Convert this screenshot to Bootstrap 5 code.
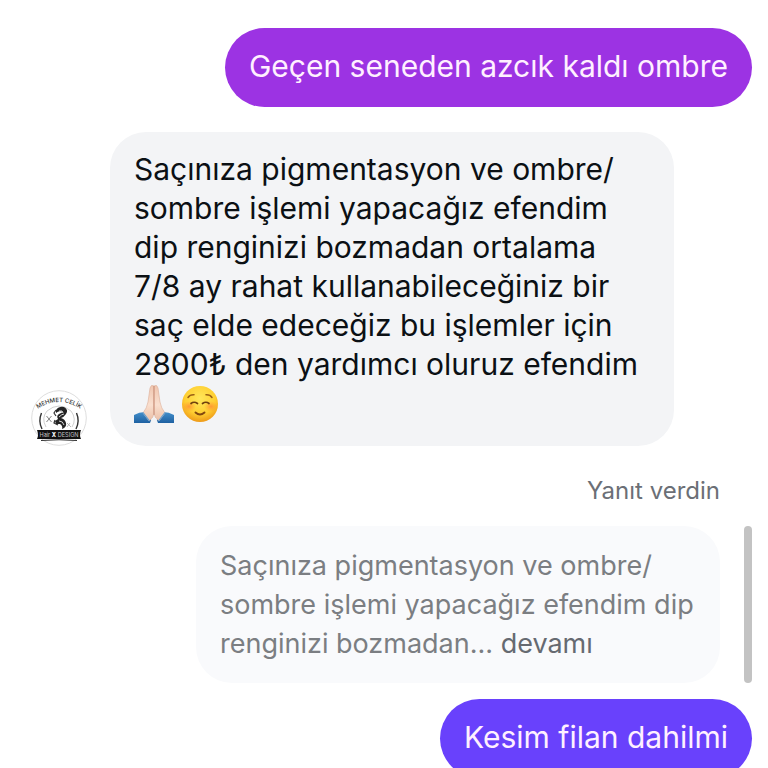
<!DOCTYPE html>
<html lang="tr">
<head>
<meta charset="utf-8">
<meta name="viewport" content="width=device-width, initial-scale=1">
<title>Mesajlar</title>
<link href="https://cdn.jsdelivr.net/npm/bootstrap@5.3.0/dist/css/bootstrap.min.css" rel="stylesheet">
<style>
body{font-family:Inter,"Noto Sans",sans-serif;background:#fff;color:#0b1014}
.chat{padding:28px 16px 0;height:100vh}
.bubble{border-radius:40px;padding:19px 24px 21px;font-size:30px;line-height:39px}
.bubble-in{background:#f3f4f6;border-radius:36px;max-width:564px;padding:18px 24px 22px}
.bubble-sent{background:#9c33e3;color:#fff0ff}
.bubble-last{background:#6941fc;color:#fff0ff}
.incoming{margin-top:25px;padding-left:15px;gap:23px}
.reply-label{margin:30px 32px 0 0;font-size:24px;line-height:30px;color:#6b6f76}
.quote-row{margin-top:20px;gap:24px}
.bubble-quote{background:#f9fafc;color:#7b7e82;font-size:27px;border-radius:36px;max-width:524px;padding:20px 24px}
.bubble-quote a{color:#666a71}
.quote-bar{width:8px;border-radius:4px;background:#c3c3c3}
.last-row{margin-top:16px}
.emoji{width:40px;height:40px;vertical-align:top}
.emoji + .emoji{margin-left:6px}
.avatar{width:56px;height:56px}
</style>
<script src="https://cdn.jsdelivr.net/npm/bootstrap@5.3.0/dist/js/bootstrap.bundle.min.js"></script>
</head>
<body>
<main class="chat d-flex flex-column overflow-hidden">
  <div class="d-flex justify-content-end flex-shrink-0">
    <div class="bubble bubble-sent">Geçen seneden azcık kaldı ombre</div>
  </div>

  <div class="incoming d-flex align-items-end flex-shrink-0">
    <svg class="avatar flex-shrink-0" viewBox="0 0 56 56" role="img" aria-label="Mehmet Çelik Hair Design">
      <defs><path id="arc" d="M5 20Q28 4 51 20"/></defs>
      <circle cx="28" cy="28" r="27.3" fill="#fff" stroke="#dedede" stroke-width="1"/>
      <text font-family="Inter,sans-serif" font-size="6" font-weight="500" fill="#333"><textPath href="#arc" startOffset="50%" text-anchor="middle">MEHMET CELİK</textPath></text>
      <path d="M10.500 23Q7 31 11 39M45.500 23Q49 31 45 39" fill="none" stroke="#333" stroke-width="1.400"/>
      <path d="M15 37Q10 28 16 21Q28 11 40 21Q46 29 41 37" fill="none" stroke="#bbb" stroke-width=".7"/>
      <path d="M15.500 26l5 6M20.500 26l-5 6" stroke="#777" stroke-width=".9"/>
      <path d="M36 33l4 4M39 33l-3 4" stroke="#aaa" stroke-width=".8"/>
      <path d="M25 20Q28 16 33 17Q38 20 35 24Q33 27 30 28Q34 29 35 33Q36 37 31 39Q32 36 29 34L25 34L24 31L27 29Q25 26 28 24L32 22Q28 20 25 23Z" fill="#242424"/>
      <path d="M28 21q4-1 4 2M28 27q3-3 5-3M28 31q4 0 5 4" fill="none" stroke="#fff" stroke-width=".8"/>
      <path d="M25 20l-2 3 2 3M24 30l-1 3 4 2" fill="none" stroke="#333" stroke-width="1.200"/>
      <path d="M6 40H50Q48 45 50 49H6Q8 45 6 40Z" fill="#111"/>
      <path d="M10 50.500Q28 49 46 50.500" fill="none" stroke="#333" stroke-width="1"/>
      <text x="28" y="46.600" text-anchor="middle" font-family="Inter,sans-serif" font-size="5.600" fill="#c4c4c4">Hair <tspan font-weight="800" fill="#fff">X</tspan> DESIGN</text>
    </svg>
    <div class="bubble bubble-in">Saçınıza pigmentasyon ve ombre/<br>sombre işlemi yapacağız efendim dip renginizi bozmadan ortalama 7/8 ay rahat kullanabileceğiniz bir saç elde edeceğiz bu işlemler için 2800₺ den yardımcı oluruz efendim
      <br><svg class="emoji" viewBox="0 0 40 40" role="img" aria-label="Teşekkürler">
        <defs>
          <linearGradient id="skin" x2="0" y2="1"><stop stop-color="#f0c6b0"/><stop offset=".55" stop-color="#fadfce"/><stop offset="1" stop-color="#eabfa7"/></linearGradient>
          <linearGradient id="sleeve" x2="0" y2="1"><stop stop-color="#438fcb"/><stop offset="1" stop-color="#1e61a2"/></linearGradient>
        </defs>
        <path d="M0 31Q5 28 11 28L19 38V39H0Z" fill="url(#sleeve)"/>
        <path d="M40 31Q35 28 29 28L21 38V39H40Z" fill="url(#sleeve)"/>
        <path d="M20 2Q17 0 16 4L14 18Q13 24 9 29L15 37Q20 34 20 27Z" fill="url(#skin)" stroke="#dcae98" stroke-width=".6"/>
        <path d="M20 2Q23 0 24 4L26 18Q27 24 31 29L25 37Q20 34 20 27Z" fill="url(#skin)" stroke="#dcae98" stroke-width=".6"/>
        <path d="M20 2V31" fill="none" stroke="#c98e78" stroke-width="1"/>
        <path d="M18 34L22 34L24 39H16Z" fill="#f3f4f6"/>
        <path d="M9 28.500L15.500 37M31 28.500L24.500 37" stroke="#5f9fd4" stroke-width="1.200"/>
      </svg><svg class="emoji" viewBox="0 0 40 40" role="img" aria-label="Gülümseme">
        <defs>
          <radialGradient id="face" cx=".5" cy=".35" r=".65"><stop stop-color="#ffe75a"/><stop offset=".65" stop-color="#ffcf32"/><stop offset="1" stop-color="#ee9a18"/></radialGradient>
          <radialGradient id="blush"><stop stop-color="#ff7b35" stop-opacity=".65"/><stop offset="1" stop-color="#ff8a30" stop-opacity="0"/></radialGradient>
        </defs>
        <circle cx="20" cy="20" r="18" fill="url(#face)"/>
        <ellipse cx="9" cy="22.500" rx="7" ry="5.500" fill="url(#blush)"/>
        <ellipse cx="31" cy="22.500" rx="7" ry="5.500" fill="url(#blush)"/>
        <path d="M8 13.500Q10 10.500 14 10.800M32 13.500Q30 10.500 26 10.800" fill="none" stroke="#9a6015" stroke-width="1.500" stroke-linecap="round"/>
        <path d="M11 19.500Q14 17 17.500 19.500M22.500 19.500Q26 17 29 19.500" fill="none" stroke="#70400e" stroke-width="1.700" stroke-linecap="round"/>
        <path d="M15.500 28.500Q20 32.500 24.500 28.500" fill="none" stroke="#82480f" stroke-width="1.900" stroke-linecap="round"/>
      </svg></div>
  </div>

  <div class="reply-label text-end flex-shrink-0">Yanıt verdin</div>

  <div class="quote-row d-flex justify-content-end flex-shrink-0">
    <div class="bubble bubble-quote">Saçınıza pigmentasyon ve ombre/<br>sombre işlemi yapacağız efendim dip renginizi bozmadan... <a href="#" class="text-decoration-none">devamı</a></div>
    <div class="quote-bar flex-shrink-0"></div>
  </div>

  <div class="last-row d-flex justify-content-end flex-shrink-0">
    <div class="bubble bubble-last">Kesim filan dahilmi</div>
  </div>
</main>
</body>
</html>
